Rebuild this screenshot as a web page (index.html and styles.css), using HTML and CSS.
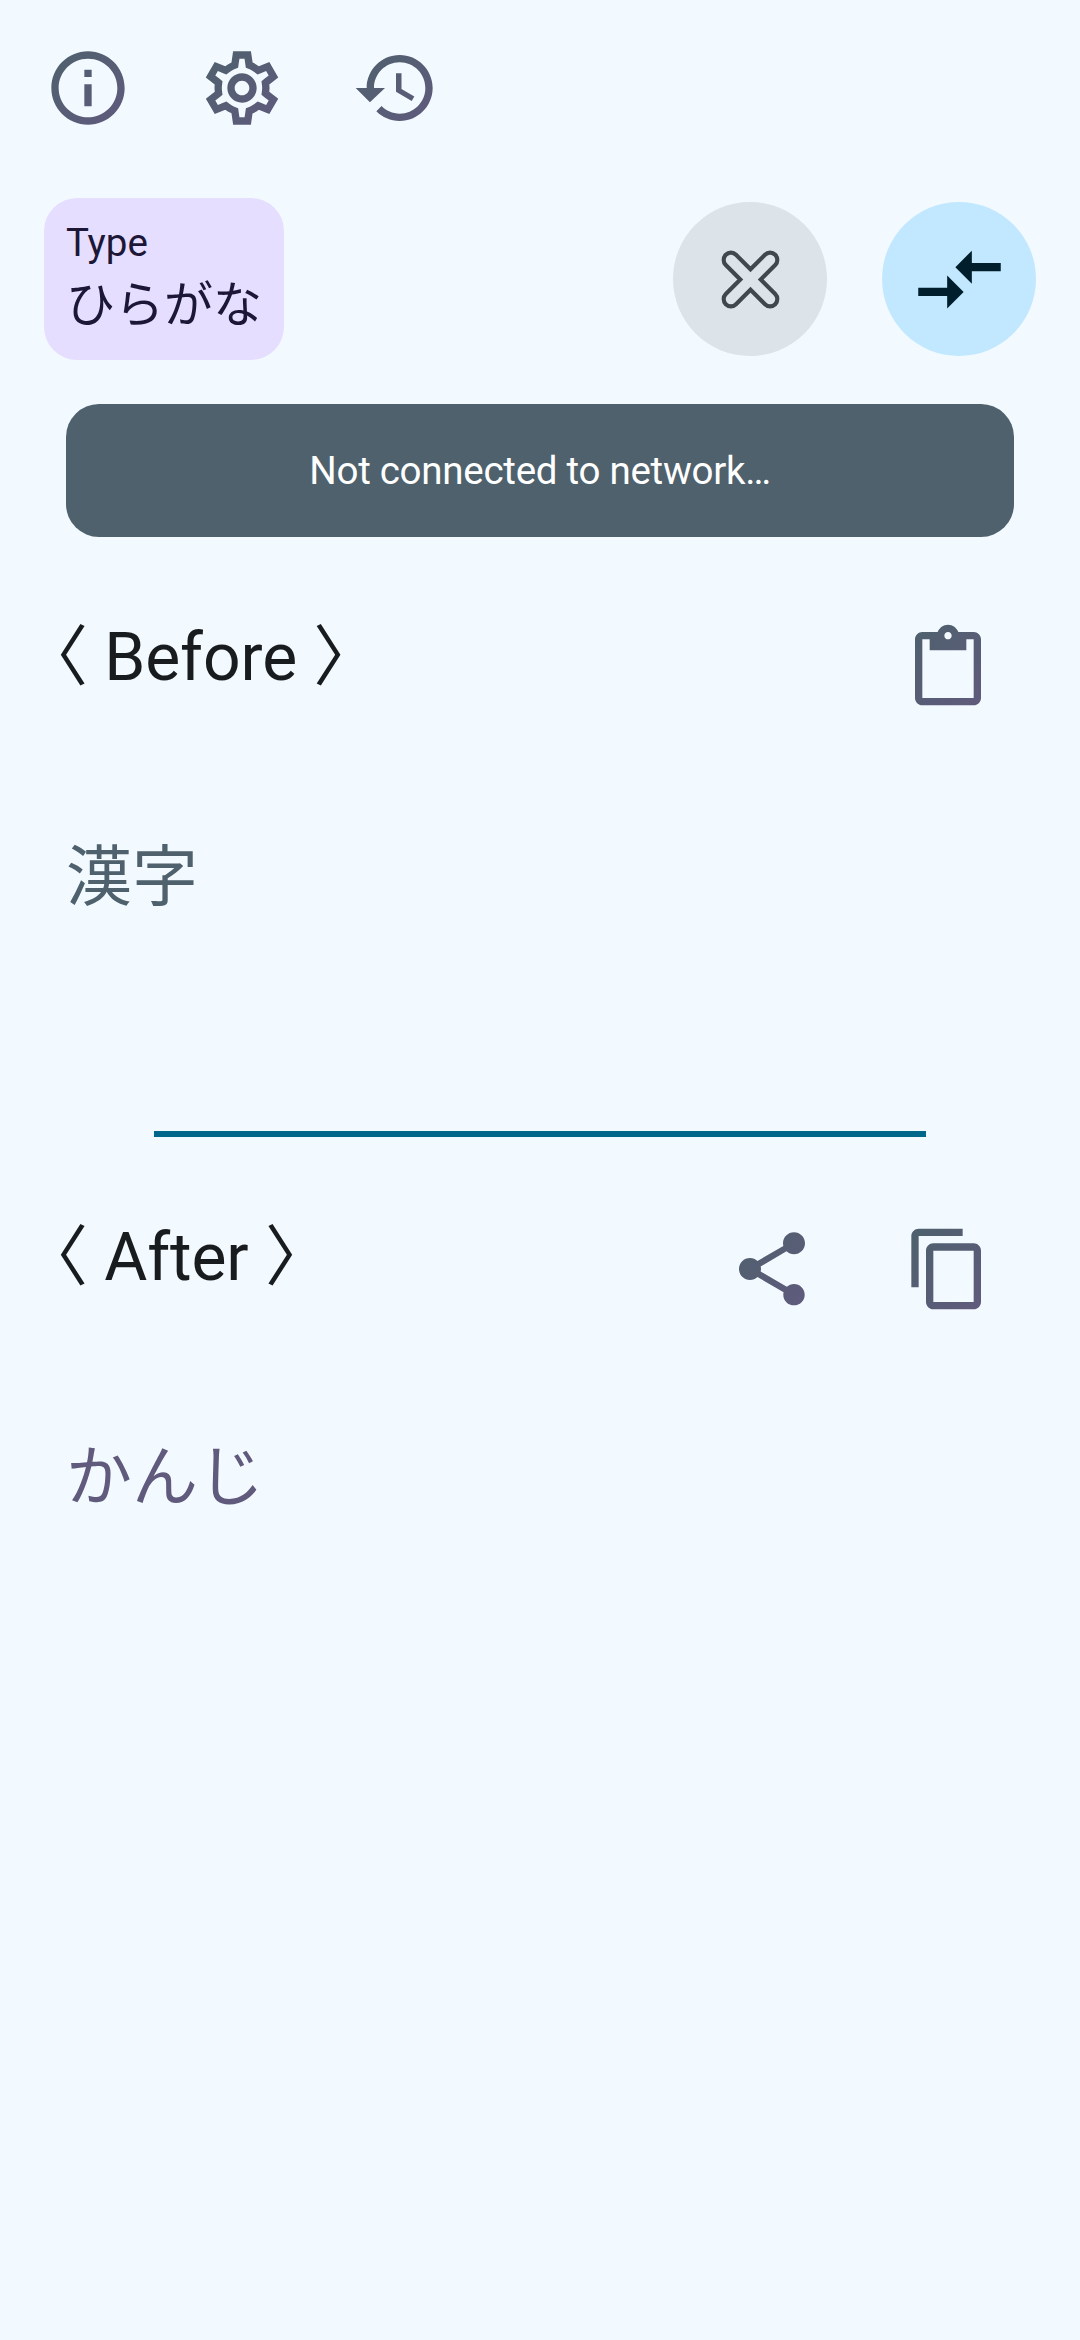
FILE: index.html
```html
<!DOCTYPE html>
<html lang="ja">
<head>
<meta charset="utf-8">
<title>Kanji converter</title>
<link rel="stylesheet" href="styles.css">
</head>
<body>
<svg class="defs" width="0" height="0" aria-hidden="true">
  <defs>
    <linearGradient id="tint" gradientUnits="userSpaceOnUse" x1="2" y1="2" x2="22" y2="22">
      <stop offset="0" stop-color="#4e616d"/>
      <stop offset="1" stop-color="#605a7d"/>
    </linearGradient>
  </defs>
</svg>
<main class="screen">
  <nav class="toolbar">
    <svg class="icon" viewBox="0 0 24 24"><path d="M11 7h2v2h-2zm0 4h2v6h-2zm1-9C6.480 2 2 6.480 2 12s4.480 10 10 10 10-4.480 10-10S17.520 2 12 2zm0 18c-4.410 0-8-3.590-8-8s3.590-8 8-8 8 3.590 8 8-3.590 8-8 8z"/></svg>
    <svg class="icon" viewBox="0 0 24 24"><path fill-rule="evenodd" d="M19.440 12.990l-.01.02c.04-.33.08-.67.08-1.010 0-.34-.03-.66-.07-.99l.01.02 2.440-1.920-2.430-4.220-2.870 1.160.01.01c-.52-.4-1.090-.74-1.710-1h.01L14.440 2H9.570l-.44 3.070h.01c-.62.26-1.190.6-1.710 1l.01-.01-2.880-1.170-2.440 4.220 2.440 1.920.01-.02c-.04.33-.07.65-.07.99 0 .34.03.68.08 1.010l-.01-.02-2.100 1.650-.33.26 2.430 4.200 2.880-1.150-.02-.04c.53.41 1.100.75 1.730 1.010h-.03L9.580 22h4.850l.06-.42.38-2.650h-.01c.62-.26 1.200-.6 1.730-1.010l-.02.04 2.880 1.150 2.430-4.200-.33-.26zM17.450 11.270c.04.31.05.52.05.73 0 .21-.02.43-.05.73l-.14 1.130.89.7 1.080.84-.7 1.210-1.270-.51-1.040-.42-.9.68c-.43.32-.84.56-1.250.73l-1.060.43-.16 1.130-.2 1.350h-1.400l-.19-1.350-.16-1.130-1.060-.43c-.43-.18-.83-.41-1.230-.71l-.91-.7-1.060.43-1.270.51-.7-1.210 1.080-.84.89-.7-.14-1.130c-.03-.31-.05-.54-.05-.74s.02-.43.05-.73l.14-1.130-.89-.7-1.080-.84.7-1.210 1.270.51 1.040.42.9-.68c.43-.32.84-.56 1.250-.73l1.060-.43.16-1.130.2-1.350h1.390l.19 1.350.16 1.130 1.060.43c.43.18.83.41 1.230.71l.91.7 1.060-.43 1.270-.51.7 1.210-1.070.85-.89.7z"/><path d="M12 8c-2.210 0-4 1.790-4 4s1.790 4 4 4 4-1.790 4-4-1.790-4-4-4zm0 6c-1.100 0-2-.9-2-2s.9-2 2-2 2 .9 2 2-.9 2-2 2z"/></svg>
    <svg class="icon" viewBox="0 0 24 24"><path d="M13 3c-4.970 0-9 4.030-9 9H1l3.890 3.890L9 12H6c0-3.870 3.130-7 7-7s7 3.130 7 7-3.130 7-7 7c-1.930 0-3.680-.79-4.940-2.060l-1.420 1.420C8.270 19.990 10.510 21 13 21c4.970 0 9-4.030 9-9s-4.030-9-9-9zm-1 5v5l4.280 2.540.72-1.210-3.500-2.080V8z"/></svg>
  </nav>

  <section class="controls">
    <div class="type-card">
      <span class="type-label">Type</span>
      <span class="type-value">ひらがな</span>
    </div>
    <div class="actions">
      <div class="round clear">
        <svg viewBox="0 0 24 24"><path d="M12 9.530L15.510 6.010A1.750 1.750 0 0 1 17.990 8.490L14.470 12L17.990 15.510A1.750 1.750 0 0 1 15.510 17.990L12 14.470L8.490 17.990A1.750 1.750 0 0 1 6.010 15.510L9.530 12L6.010 8.490A1.750 1.750 0 0 1 8.490 6.010Z"/></svg>
      </div>
      <div class="round convert">
        <svg viewBox="0 0 24 24"><path d="M9.010 14H2v2h7.010v3L13 15l-3.990-4zM14.990 13v-3H22V8h-7.010V5L11 9z"/></svg>
      </div>
    </div>
  </section>

  <div class="banner">Not connected to network…</div>

  <section class="panel before">
    <header class="panel-head">
      <h2>〈 Before 〉</h2>
      <div class="tools">
        <svg class="icon" viewBox="0 0 24 24"><path d="M19 3h-4.180C14.400 1.840 13.300 1 12 1s-2.400.84-2.820 2H5c-1.100 0-2 .9-2 2v16c0 1.100.9 2 2 2h14c1.100 0 2-.9 2-2V5c0-1.100-.9-2-2-2zm-7 0c.55 0 1 .45 1 1s-.45 1-1 1-1-.45-1-1 .45-1 1-1zm7 18H5V5h2v3h10V5h2z"/></svg>
      </div>
    </header>
    <p class="text">漢字</p>
  </section>

  <hr class="divider">

  <section class="panel after">
    <header class="panel-head">
      <h2>〈 After 〉</h2>
      <div class="tools">
        <svg class="icon" viewBox="0 0 24 24"><path d="M18 16.080c-.76 0-1.440.3-1.960.77L8.910 12.700c.05-.23.09-.46.09-.7s-.04-.47-.09-.7l7.050-4.110c.54.5 1.250.81 2.040.81 1.660 0 3-1.340 3-3s-1.340-3-3-3-3 1.340-3 3c0 .24.04.47.09.7L8.040 9.810C7.500 9.310 6.790 9 6 9c-1.660 0-3 1.340-3 3s1.340 3 3 3c.79 0 1.500-.31 2.040-.81l7.120 4.160c-.05.21-.08.43-.08.65 0 1.610 1.310 2.920 2.920 2.920s2.920-1.310 2.920-2.920-1.310-2.920-2.920-2.920z"/></svg>
        <svg class="icon" viewBox="0 0 24 24"><path d="M16 1H4c-1.100 0-2 .9-2 2v14h2V3h12zm3 4H8c-1.100 0-2 .9-2 2v14c0 1.100.9 2 2 2h11c1.100 0 2-.9 2-2V7c0-1.100-.9-2-2-2zm0 16H8V7h11z"/></svg>
      </div>
    </header>
    <p class="text">かんじ</p>
  </section>
</main>
</body>
</html>
```
FILE: styles.css
```css
* {
  box-sizing: border-box;
  margin: 0;
  padding: 0;
}

body {
  background: #f3faff;
  color: #181c1f;
  font-family: Roboto, "Noto Sans CJK JP", sans-serif;
}

.defs {
  display: block;
}

.screen {
  display: flex;
  flex-direction: column;
  min-height: 2340px;
  padding-top: 44px;
}

.icon {
  display: block;
  width: 88px;
  height: 88px;
  fill: url(#tint);
}

.toolbar {
  display: flex;
  gap: 66px;
  padding-left: 44px;
}

.controls {
  display: flex;
  align-items: center;
  justify-content: space-between;
  height: 162px;
  margin: 66px 44px 0;
}

.type-card {
  display: flex;
  flex-direction: column;
  width: 240px;
  height: 162px;
  padding: 20px 0 0 22px;
  border-radius: 33px;
  background: #e5deff;
  color: #1c1736;
  white-space: nowrap;
}

.type-label {
  font-size: 38.5px;
  line-height: 50px;
}

.type-value {
  font-size: 49px;
  line-height: 75px;
}

.actions {
  display: flex;
  gap: 55px;
}

.round {
  display: flex;
  align-items: center;
  justify-content: center;
  width: 154px;
  height: 154px;
  border-radius: 50%;
}

.round svg {
  width: 99px;
  height: 99px;
}

.clear {
  background: #dce3e9;
}

.clear path {
  fill: none;
  stroke: #40484d;
  stroke-width: 1;
}

.convert {
  background: #c2e8ff;
  fill: #001e2b;
}

.banner {
  height: 133px;
  margin: 44px 66px 0;
  border-radius: 33px;
  background: #4e616d;
  color: #fff;
  font-size: 38.5px;
  letter-spacing: -0.27px;
  line-height: 133px;
  text-align: center;
}

.panel-head {
  display: flex;
  justify-content: space-between;
  height: 132px;
  padding: 0 88px 0 22px;
}

.panel-head h2 {
  font-size: 66px;
  font-weight: 400;
  letter-spacing: -0.1px;
  line-height: 88px;
  white-space: nowrap;
}

.tools {
  display: flex;
  gap: 88px;
}

.text {
  padding: 0 66px;
  font-size: 66px;
  line-height: 96px;
}

.before {
  height: 517px;
  margin-top: 77px;
}

.before .tools {
  padding-top: 7px;
}

.before .text {
  padding-top: 84px;
  color: #4e616d;
}

.after {
  margin-top: 77px;
}

.after .tools {
  padding-top: 11px;
}

.after .text {
  padding-top: 84px;
  color: #605a7d;
}

.divider {
  height: 5.5px;
  margin: 0 154px;
  border: 0;
  background: #00668a;
}
```
